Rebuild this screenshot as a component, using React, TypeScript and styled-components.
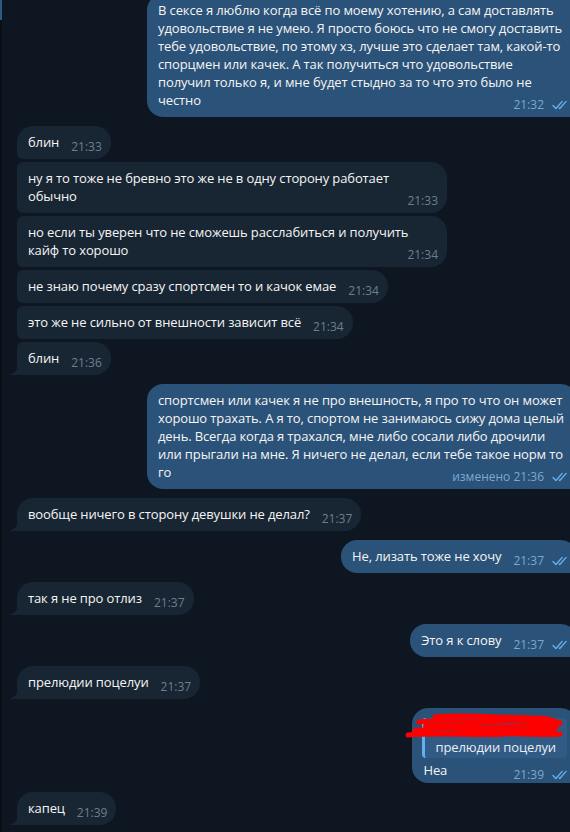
import React from "react";
import styled, { createGlobalStyle } from "styled-components";

type Message = {
  out: boolean;
  text: string;
  time: string;
  edited?: boolean;
  reply?: string;
};

const messages: Message[] = [
  {
    out: true,
    text: "В сексе я люблю когда всё по моему хотению, а сам доставлять удовольствие я не умею. Я просто боюсь что не смогу доставить тебе удовольствие, по этому хз, лучше это сделает там, какой-то спорцмен или качек. А так получиться что удовольствие получил только я, и мне будет стыдно за то что это было не честно",
    time: "21:32",
  },
  { out: false, text: "блин", time: "21:33" },
  { out: false, text: "ну я то тоже не бревно это же не в одну сторону работает обычно", time: "21:33" },
  { out: false, text: "но если ты уверен что не сможешь расслабиться и получить кайф то хорошо", time: "21:34" },
  { out: false, text: "не знаю почему сразу спортсмен то и качок емае", time: "21:34" },
  { out: false, text: "это же не сильно от внешности зависит всё", time: "21:34" },
  { out: false, text: "блин", time: "21:36" },
  {
    out: true,
    text: "спортсмен или качек я не про внешность, я про то что он может хорошо трахать. А я то, спортом не занимаюсь сижу дома целый день. Всегда когда я трахался, мне либо сосали либо дрочили или прыгали на мне. Я ничего не делал, если тебе такое норм то го",
    time: "21:36",
    edited: true,
  },
  { out: false, text: "вообще ничего в сторону девушки не делал?", time: "21:37" },
  { out: true, text: "Не, лизать тоже не хочу", time: "21:37" },
  { out: false, text: "так я не про отлиз", time: "21:37" },
  { out: true, text: "Это я к слову", time: "21:37" },
  { out: false, text: "прелюдии поцелуи", time: "21:37" },
  { out: true, text: "Неа", time: "21:39", reply: "прелюдии поцелуи" },
  { out: false, text: "капец", time: "21:39" },
];

const GlobalStyle = createGlobalStyle`
  html, body {
    margin: 0;
    padding: 0;
    background: #0e1621;
    overflow: hidden;
  }
  body {
    font-family: "Open Sans", "Noto Sans", sans-serif;
    -webkit-font-smoothing: antialiased;
  }
`;

const Screen = styled.div`
  display: flex;
  width: 570px;
  height: 832px;
  overflow: hidden;
  background: #0e1621;
`;

const Edge = styled.div`
  position: relative;
  flex: 0 0 2px;
  background: #0a0f15;

  &::before {
    content: "";
    position: absolute;
    top: 0;
    left: 0;
    width: 2px;
    height: 20px;
    background: #2b5a86;
  }
`;

const Chat = styled.div`
  flex: 1;
  display: flex;
  flex-direction: column;
  margin-top: -6px;
  min-width: 0;
`;

const Row = styled.div<{ $out: boolean; $gap: number }>`
  display: flex;
  justify-content: ${({ $out }) => ($out ? "flex-end" : "flex-start")};
  margin-top: ${({ $gap }) => $gap}px;
  padding-left: ${({ $out }) => ($out ? 0 : 15)}px;
  margin-right: ${({ $out }) => ($out ? -7 : 0)}px;
`;

const Bubble = styled.div<{ $out: boolean; $first: boolean; $last: boolean }>`
  position: relative;
  box-sizing: border-box;
  max-width: 430px;
  padding: 7px ${({ $out }) => ($out ? 10 : 9)}px 8px 11px;
  background: ${({ $out }) => ($out ? "#2b5278" : "#182533")};
  color: #f5f5f5;
  font-size: 13px;
  letter-spacing: -0.12px;
  line-height: 18px;
  border-radius: ${({ $out, $first, $last }) =>
    $out
      ? `16px ${$first ? 16 : 6}px ${$last ? 0 : 6}px 16px`
      : `${$first ? 16 : 6}px 16px 16px ${$last ? 0 : 6}px`};
  display: flow-root;

  &.reply {
    padding-top: 10px;
    padding-bottom: 4px;
  }
`;

const Tail = styled.svg`
  position: absolute;
  left: -7px;
  bottom: 0;
  width: 8px;
  height: 12px;
`;

const Meta = styled.span<{ $out: boolean }>`
  float: right;
  display: flex;
  align-items: center;
  gap: 8px;
  margin: 5px 0 -5px 12px;
  font-size: 12px;
  letter-spacing: 0;
  line-height: 18px;
  color: ${({ $out }) => ($out ? "#7da8d3" : "#6d7f8f")};
`;

const Checks = styled.svg`
  width: 15px;
  height: 10px;
`;

const Quote = styled.div`
  position: relative;
  margin: 0 0 3px -1px;
  padding: 2px 11px 2px 10px;
  border-left: 3px solid #64b0ee;
  border-radius: 4px;
  background: rgba(110, 180, 245, 0.1);
  color: #e9eff5;
  white-space: nowrap;
`;

const QuoteName = styled.div`
  height: 18px;
`;

const Scribble = styled.svg`
  position: absolute;
  left: -20px;
  top: -4px;
  width: 162px;
  height: 26px;
  overflow: visible;
`;

const DoubleCheck = () => (
  <Checks viewBox="0 0 15 10" fill="none">
    <path
      d="M1 5.6 L3.9 8.5 L10.2 1.4"
      stroke="#64b0ee"
      strokeWidth="1.4"
      strokeLinecap="round"
      strokeLinejoin="round"
    />
    <path
      d="M7.2 7.9 L7.8 8.5 L14.1 1.4"
      stroke="#64b0ee"
      strokeWidth="1.4"
      strokeLinecap="round"
      strokeLinejoin="round"
    />
  </Checks>
);

const RedactedName = () => (
  <Scribble viewBox="0 0 162 26" fill="none">
    <g stroke="#ff0000" strokeLinecap="round" strokeLinejoin="round">
      <path d="M30 3 C60 0, 95 4, 130 4 C140 4, 148 6, 152 8" strokeWidth="5" />
      <path d="M14 8 C40 5, 70 9, 100 7 C120 6, 140 10, 155 9" strokeWidth="5" />
      <path d="M20 12 C50 10, 80 14, 110 12 C130 11, 145 14, 152 13" strokeWidth="4" />
      <path d="M10 16 C45 13, 90 18, 150 15" strokeWidth="4" />
      <path d="M3 21 C40 18, 70 22, 100 20 C120 19, 140 22, 155 20" strokeWidth="5" />
      <path d="M8 18 L40 15 L80 19 L120 16 L150 18" strokeWidth="3" />
    </g>
  </Scribble>
);

const App: React.FC = () => {
  return (
    <>
      <GlobalStyle />
      <Screen>
        <Edge />
        <Chat>
          {messages.map((m, i) => {
            const prev = messages[i - 1];
            const next = messages[i + 1];
            const first = !prev || prev.out !== m.out;
            const last = !next || next.out !== m.out;
            return (
              <Row key={i} $out={m.out} $gap={i === 0 ? 0 : first ? 9 : 3}>
                <Bubble
                  $out={m.out}
                  $first={first}
                  $last={last}
                  className={m.reply ? "reply" : undefined}
                >
                  {m.reply ? (
                    <Quote>
                      <QuoteName>
                        <RedactedName />
                      </QuoteName>
                      {m.reply}
                    </Quote>
                  ) : null}
                  {m.text}
                  <Meta $out={m.out}>
                    <span>{m.edited ? `изменено ${m.time}` : m.time}</span>
                    {m.out ? <DoubleCheck /> : null}
                  </Meta>
                  {!m.out && last ? (
                    <Tail viewBox="0 0 8 12">
                      <path d="M8 0 C8 6 5.5 10 0.5 11.2 C0 11.4 0 12 0.6 12 L8 12 Z" fill="#182533" />
                    </Tail>
                  ) : null}
                </Bubble>
              </Row>
            );
          })}
        </Chat>
      </Screen>
    </>
  );
};

export default App;
